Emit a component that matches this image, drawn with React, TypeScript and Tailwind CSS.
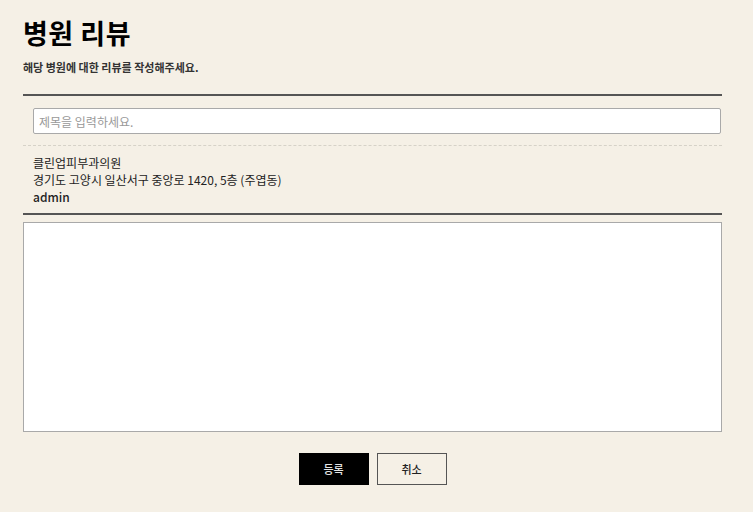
import React from "react";

export default function App() {
  const font = { fontFamily: '"Noto Sans CJK KR", "Noto Sans", sans-serif' };
  return (
    <div className="min-h-[512px] w-full bg-[#f5f0e6]" style={font}>
      <div className="ml-[23px] w-[699px] pt-[14px]">
        <h1 className="text-[27px] leading-[38px] font-bold text-black tracking-[0.5px]">병원 리뷰</h1>
        <p className="mt-[7px] text-[11px] leading-[16px] font-bold text-[#333]">
          해당 병원에 대한 리뷰를 작성해주세요.
        </p>
        <div className="mt-[19px] border-t-2 border-[#555]">
          <div className="pl-[10px] pr-[1px] pt-[12px] pb-[11px]">
            <input
              type="text"
              placeholder="제목을 입력하세요."
              className="block h-[26px] w-full rounded-[2px] border border-[#a9a9a9] bg-white px-[5px] text-[12px] text-[#333] placeholder:text-[#999] outline-none"
              style={font}
            />
          </div>
          <div className="border-t border-dashed border-[#d6d2c8]">
            <div className="pl-[10px] pt-[8px] pb-[8px] text-[12px] leading-[17px] text-[#222]">
              <div>클린업피부과의원</div>
              <div>경기도 고양시 일산서구 중앙로 1420, 5층 (주엽동)</div>
              <div className="font-medium">admin</div>
            </div>
          </div>
          <div className="border-t-2 border-[#555] pt-[7px]">
            <textarea
              className="block h-[210px] w-full resize-none border border-[#a9a9a9] bg-white p-[4px] text-[12px] outline-none"
              style={font}
            />
          </div>
          <div className="mt-[21px] flex justify-center gap-[8px]">
            <button className="h-[32px] w-[70px] bg-black text-[11px] font-medium text-[#e5e5e5]">등록</button>
            <button className="h-[32px] w-[70px] border border-[#555] bg-transparent text-[11px] font-medium text-[#222]">취소</button>
          </div>
        </div>
      </div>
    </div>
  );
}
